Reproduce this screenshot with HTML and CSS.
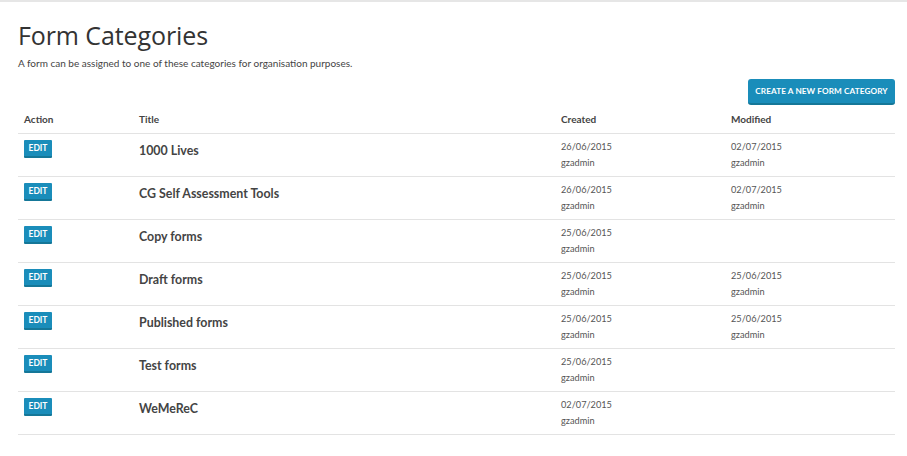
FILE: index.html
```html
<!DOCTYPE html>
<html>
<head>
<meta charset="utf-8">
<link rel="stylesheet" href="styles.css">
</head>
<body>
<div class="page">
  <h1 class="title">Form Categories</h1>
  <p class="intro">A form can be assigned to one of these categories for organisation purposes.</p>
  <div class="actions">
    <button class="btn btn-create">CREATE A NEW FORM CATEGORY</button>
  </div>
  <table class="grid">
    <thead>
      <tr>
        <th class="c-action">Action</th>
        <th class="c-title">Title</th>
        <th class="c-created">Created</th>
        <th class="c-mod">Modified</th>
      </tr>
    </thead>
    <tbody>
      <tr>
        <td class="act"><button class="btn btn-edit">EDIT</button></td>
        <td class="name">1000 Lives</td>
        <td class="meta">26/06/2015<br>gzadmin</td>
        <td class="meta">02/07/2015<br>gzadmin</td>
      </tr>
      <tr>
        <td class="act"><button class="btn btn-edit">EDIT</button></td>
        <td class="name">CG Self Assessment Tools</td>
        <td class="meta">26/06/2015<br>gzadmin</td>
        <td class="meta">02/07/2015<br>gzadmin</td>
      </tr>
      <tr>
        <td class="act"><button class="btn btn-edit">EDIT</button></td>
        <td class="name">Copy forms</td>
        <td class="meta">25/06/2015<br>gzadmin</td>
        <td class="meta"></td>
      </tr>
      <tr>
        <td class="act"><button class="btn btn-edit">EDIT</button></td>
        <td class="name">Draft forms</td>
        <td class="meta">25/06/2015<br>gzadmin</td>
        <td class="meta">25/06/2015<br>gzadmin</td>
      </tr>
      <tr>
        <td class="act"><button class="btn btn-edit">EDIT</button></td>
        <td class="name">Published forms</td>
        <td class="meta">25/06/2015<br>gzadmin</td>
        <td class="meta">25/06/2015<br>gzadmin</td>
      </tr>
      <tr>
        <td class="act"><button class="btn btn-edit">EDIT</button></td>
        <td class="name">Test forms</td>
        <td class="meta">25/06/2015<br>gzadmin</td>
        <td class="meta"></td>
      </tr>
      <tr>
        <td class="act"><button class="btn btn-edit">EDIT</button></td>
        <td class="name">WeMeReC</td>
        <td class="meta">02/07/2015<br>gzadmin</td>
        <td class="meta"></td>
      </tr>
    </tbody>
  </table>
</div>
</body>
</html>
```

FILE: styles.css
```css
* { box-sizing: border-box; }
html, body { margin: 0; padding: 0; background: #fff; }
body {
  font-family: "Lato", "Open Sans", sans-serif;
  color: #444;
  border-top: 2px solid #e6e6e6;
}
.page {
  padding: 18px 12px 20px 18px;
}
.title {
  font-family: "Open Sans", sans-serif;
  font-weight: 400;
  font-size: 25px;
  line-height: 30px;
  margin: 0;
  color: #333;
  letter-spacing: -0.1px;
}
.intro {
  margin: 7px 0 0;
  font-size: 10px;
  line-height: 13px;
  color: #444;
}
.actions {
  display: flex;
  justify-content: flex-end;
  margin-top: 9px;
}
.btn {
  font-family: "Lato", sans-serif;
  font-weight: 700;
  color: #fff;
  background: #1a8dba;
  border: none;
  border-bottom: 2px solid #157798;
  border-radius: 2px;
  cursor: pointer;
  display: flex;
  align-items: center;
  justify-content: center;
}
.btn-create {
  width: 147px;
  height: 26px;
  font-size: 8.2px;
  letter-spacing: 0.1px;
  padding: 0;
  border-radius: 3px;
}
.btn-edit {
  width: 28px;
  height: 18px;
  font-size: 8.5px;
  line-height: 10px;
  padding: 1px 0 0;
  border-radius: 1px;
}
.grid {
  width: 100%;
  border-collapse: collapse;
  margin-top: 0;
}
.grid th {
  text-align: left;
  font-size: 10px;
  font-weight: 700;
  color: #444;
  padding: 3px 6px 8px;
  height: 28px;
  vertical-align: bottom;
  border-bottom: 1px solid #e3e3e3;
}
.c-action { width: 115px; }
.c-title { width: 422px; }
.c-created { width: 170px; }
.grid td {
  height: 43px;
  padding: 6px 6px 0;
  vertical-align: top;
  border-bottom: 1px solid #e3e3e3;
}
.grid td.act { padding-top: 6px; }
.name {
  font-size: 12.4px;
  font-weight: 700;
  color: #444;
  padding-top: 9px !important;
}
.meta {
  font-size: 9.2px;
  line-height: 16px;
  color: #555;
  padding-top: 5px !important;
}
```
